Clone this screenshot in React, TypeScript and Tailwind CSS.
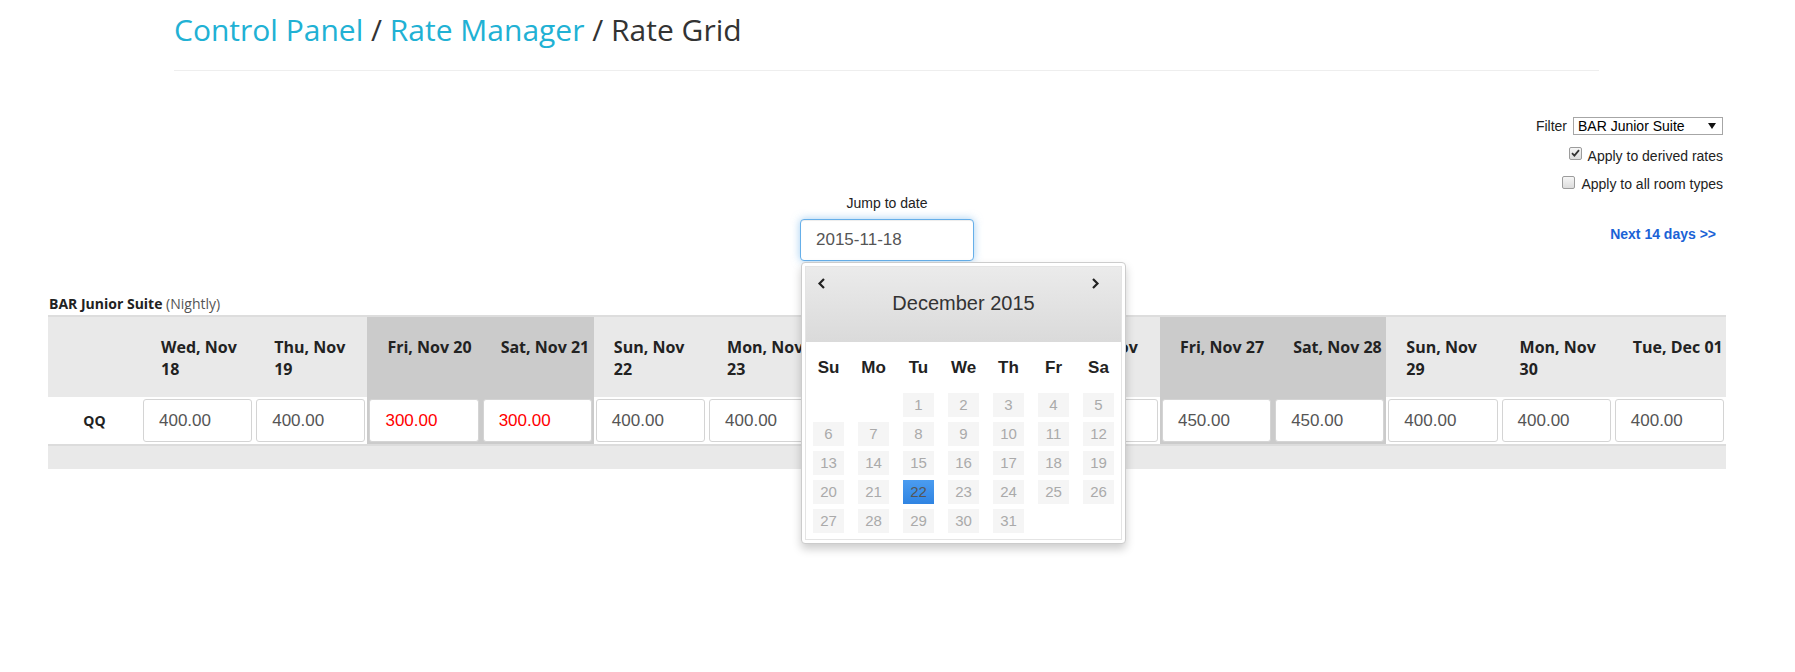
import React from 'react';

type Day = { label: string[]; value: string; weekend?: boolean; red?: boolean };

const days: Day[] = [
  { label: ['Wed, Nov', '18'], value: '400.00' },
  { label: ['Thu, Nov', '19'], value: '400.00' },
  { label: ['Fri, Nov 20'], value: '300.00', weekend: true, red: true },
  { label: ['Sat, Nov 21'], value: '300.00', weekend: true, red: true },
  { label: ['Sun, Nov', '22'], value: '400.00' },
  { label: ['Mon, Nov', '23'], value: '400.00' },
  { label: ['Tue, Nov', '24'], value: '400.00' },
  { label: ['Wed, Nov', '25'], value: '400.00' },
  { label: ['Thu, Nov', '26'], value: '400.00' },
  { label: ['Fri, Nov 27'], value: '450.00', weekend: true },
  { label: ['Sat, Nov 28'], value: '450.00', weekend: true },
  { label: ['Sun, Nov', '29'], value: '400.00' },
  { label: ['Mon, Nov', '30'], value: '400.00' },
  { label: ['Tue, Dec 01'], value: '400.00' },
];

const weekdays = ['Su', 'Mo', 'Tu', 'We', 'Th', 'Fr', 'Sa'];

// December 2015 starts on a Tuesday
const calendarCells: (number | null)[] = [null, null, ...Array.from({ length: 31 }, (_, i) => i + 1)];

const Checkbox: React.FC<{ checked?: boolean }> = ({ checked }) => (
  <span className="flex h-[13px] w-[13px] items-center justify-center rounded-[2px] border border-[#9c9c9c] bg-linear-to-b from-[#f6f6f6] to-[#dcdcdc]">
    {checked && (
      <svg width="9" height="8" viewBox="0 0 9 8">
        <path d="M1 4.2 L3.4 6.6 L8 1.2" fill="none" stroke="#333" strokeWidth="1.8" />
      </svg>
    )}
  </span>
);

const Calendar: React.FC = () => (
  <div className="absolute left-[1px] top-[66px] z-10 w-[325px] rounded-[4px] border border-[#ccc] bg-white p-[3px] shadow-[0_5px_10px_rgba(0,0,0,0.2)]">
    <div className="border border-[#e4e4e4] pb-[6px]">
      <div className="h-[75px] bg-linear-to-b from-[#ebebeb] to-[#dadada]">
        <div className="flex justify-between pl-[11px] pr-[21px] pt-[11px]">
          <svg width="9" height="11" viewBox="0 0 9 11">
            <path d="M7 1 L2.5 5.5 L7 10" fill="none" stroke="#222" strokeWidth="2.2" />
          </svg>
          <svg width="9" height="11" viewBox="0 0 9 11">
            <path d="M2 1 L6.5 5.5 L2 10" fill="none" stroke="#222" strokeWidth="2.2" />
          </svg>
        </div>
        <div className="mt-[1px] text-center text-[20px] leading-[26px] text-[#333]">December 2015</div>
      </div>
      <div className="mt-[14px] grid grid-cols-7">
        {weekdays.map((d) => (
          <div key={d} className="text-center text-[17px] font-bold leading-[24px] text-[#222]">
            {d}
          </div>
        ))}
      </div>
      <div className="mt-[13px] grid grid-cols-7 gap-y-[5px]">
        {calendarCells.map((n, i) => (
          <div key={i} className="flex justify-center">
            {n === null ? (
              <span className="h-[24px] w-[31px]" />
            ) : (
              <span
                className={
                  n === 22
                    ? 'flex h-[24px] w-[31px] items-center justify-center bg-linear-to-b from-[#4b9cf0] to-[#2f84e2] text-[15px] text-[#555]'
                    : 'flex h-[24px] w-[31px] items-center justify-center bg-[#f5f5f5] text-[15px] text-[#aaa]'
                }
              >
                {n}
              </span>
            )}
          </div>
        ))}
      </div>
    </div>
  </div>
);

const App: React.FC = () => {
  return (
    <div className="min-h-screen bg-white font-['Open_Sans',sans-serif] text-[#333]">
      <div className="ml-[174px] mr-[196px]">
        <h1 className="pt-[13px] text-[30px] leading-[33px]">
          <span className="text-[#21b1d4]">Control Panel</span> / <span className="text-[#21b1d4]">Rate Manager</span> / Rate Grid
        </h1>
        <hr className="mt-[24px] border-t border-[#eee]" />
      </div>

      <div className="ml-[48px] w-[1678px]">
        <div className="mt-[46px] flex flex-col items-end pr-[3px] font-['Liberation_Sans',Arial,sans-serif] text-[14px] text-[#222]">
          <div className="flex h-[18px] items-center gap-[6px]">
            <span>Filter</span>
            <div className="flex h-[18px] w-[150px] items-center justify-between border border-[#a6a6a6] bg-white pl-[4px] pr-[6px] text-black">
              <span>BAR Junior Suite</span>
              <svg width="8" height="6" viewBox="0 0 8 6">
                <path d="M0 0 H8 L4 6 Z" fill="#111" />
              </svg>
            </div>
          </div>
          <div className="mt-[8px] flex h-[26px] items-center gap-[6px]">
            <span className="-mt-[6px]">
              <Checkbox checked />
            </span>
            <span>Apply to derived rates</span>
          </div>
          <div className="mt-[3px] flex h-[24px] items-center gap-[6px]">
            <span className="-mt-[3px]">
              <Checkbox />
            </span>
            <span>Apply to all room types</span>
          </div>
        </div>

        <div className="grid grid-cols-[1fr_auto_1fr] font-['Liberation_Sans',Arial,sans-serif]">
          <div />
          <div className="relative flex flex-col items-center">
            <span className="text-[14px] leading-[14px] text-[#222]">Jump to date</span>
            <div className="mt-[9px] flex h-[42px] w-[174px] items-center rounded-[4px] border border-[#66afe9] bg-white pl-[15px] text-[17px] text-[#555] shadow-[inset_0_1px_1px_rgba(0,0,0,0.075),0_0_8px_rgba(102,175,233,0.6)]">
              2015-11-18
            </div>
            <Calendar />
          </div>
          <div className="flex justify-end pr-[10px] pt-[31px]">
            <a className="text-[14px] font-bold leading-[15px] text-[#1a62d6]">Next 14 days &gt;&gt;</a>
          </div>
        </div>

        <div className="mt-[34px] pl-[1px] text-[14px] leading-[18px]">
          <span className="font-bold text-[#222]">BAR Junior Suite</span> <span className="text-[#555]">(Nightly)</span>
        </div>

        <div className="mt-[2px] border-t-2 border-[#ddd]">
          <div className="grid grid-cols-[93px_repeat(14,minmax(0,1fr))]">
            <div className="h-[80px] bg-[#e9e9e9]" />
            {days.map((d, i) => (
              <div
                key={i}
                className={
                  d.weekend
                    ? 'h-[80px] whitespace-nowrap bg-[#cbcbcb] pl-[20px] pt-[19px] text-[16px] font-bold leading-[22px] text-[#222]'
                    : 'h-[80px] whitespace-nowrap bg-[#e9e9e9] pl-[20px] pt-[19px] text-[16px] font-bold leading-[22px] text-[#222]'
                }
              >
                {d.label.map((line) => (
                  <div key={line}>{line}</div>
                ))}
              </div>
            ))}

            <div className="flex h-[47px] items-center justify-center text-[14px] font-bold text-[#222]">QQ</div>
            {days.map((d, i) => (
              <div key={i} className={d.weekend ? 'h-[47px] bg-[#cbcbcb] p-[2px]' : 'h-[47px] bg-white p-[2px]'}>
                <div
                  className={
                    d.red
                      ? "flex h-[43px] items-center rounded-[3px] border border-[#d4d4d4] bg-white pl-[15px] font-['Liberation_Sans',Arial,sans-serif] text-[17px] text-[#ff0000]"
                      : "flex h-[43px] items-center rounded-[3px] border border-[#d4d4d4] bg-white pl-[15px] font-['Liberation_Sans',Arial,sans-serif] text-[17px] text-[#555]"
                  }
                >
                  {d.value}
                </div>
              </div>
            ))}
          </div>
          <div className="h-[25px] border-t-2 border-[#dcdcdc] bg-[#e9e9e9]" />
        </div>
      </div>
    </div>
  );
};

export default App;
